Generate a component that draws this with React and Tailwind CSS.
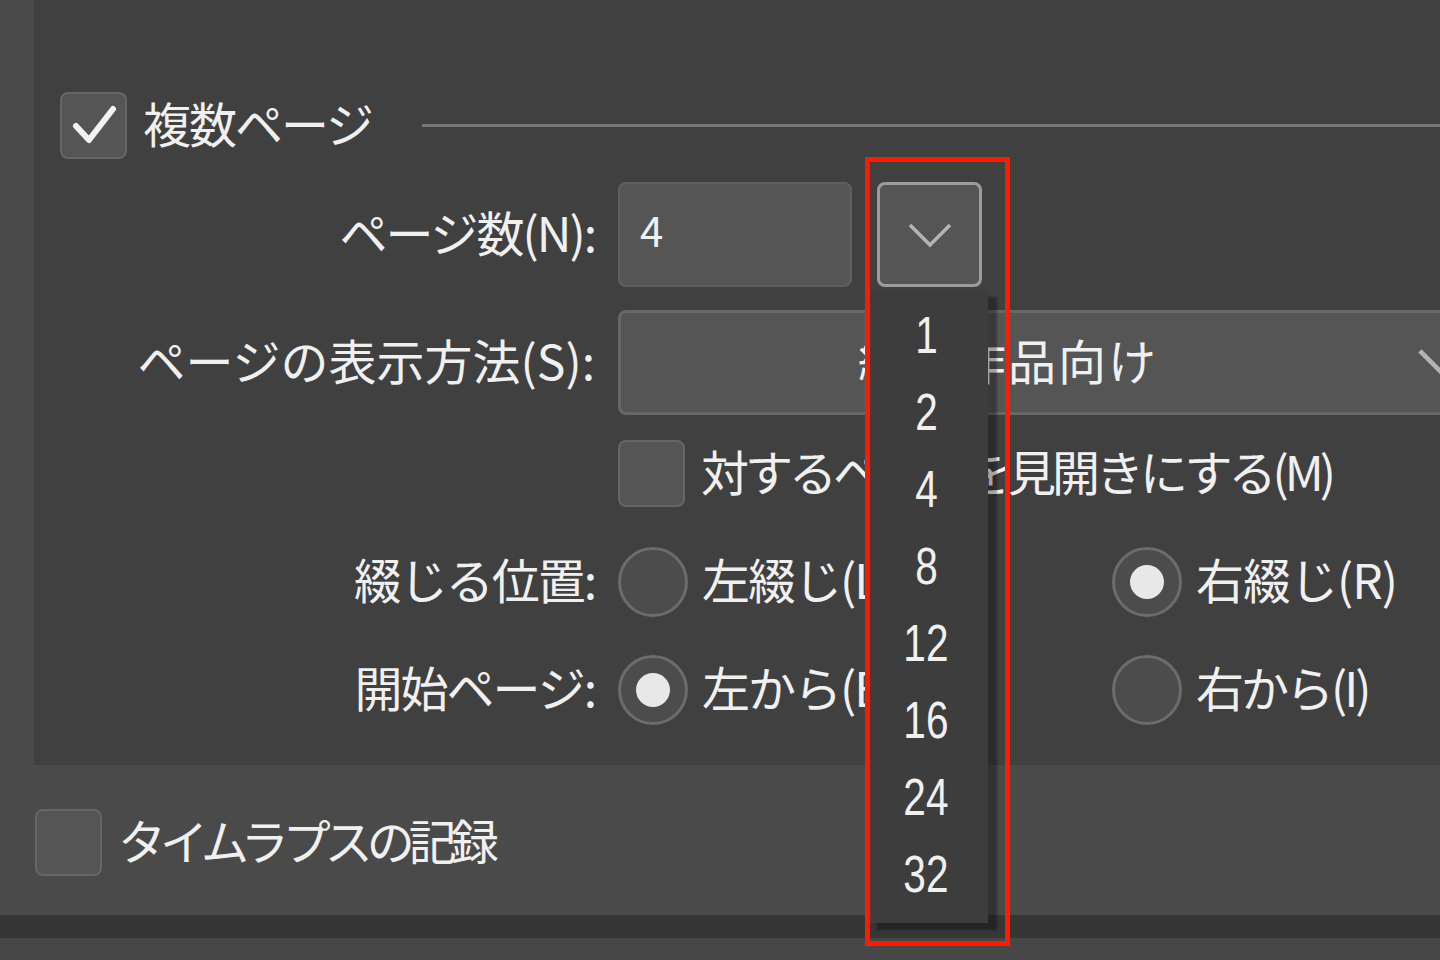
import React from "react";

const font = { fontFamily: '"Noto Sans CJK JP", "Noto Sans", sans-serif' };

function Check({ checked }) {
  return (
    <div className="w-[67px] h-[67px] shrink-0 rounded-[8px] bg-[#555555] border-2 border-[#666666] flex items-center justify-center">
      {checked && (
        <svg width="50" height="50" viewBox="0 0 50 50">
          <path d="M7 26 L20 40 L44 9" fill="none" stroke="#f2f2f2" strokeWidth="6" strokeLinecap="round" strokeLinejoin="round" />
        </svg>
      )}
    </div>
  );
}

function Radio({ checked }) {
  return (
    <div className="w-[70px] h-[70px] shrink-0 rounded-full bg-[#4c4c4c] border-[3px] border-[#6c6c6c] flex items-center justify-center">
      {checked && <div className="w-[34px] h-[34px] rounded-full bg-[#e8e8e8]" />}
    </div>
  );
}

function Chevron({ w = 46, h = 26 }) {
  return (
    <svg width={w} height={h} viewBox="0 0 46 26">
      <path d="M3 3 L23 23 L43 3" fill="none" stroke="#b4b4b4" strokeWidth="3.5" />
    </svg>
  );
}

function Row({ label, children, className = "", track = "tracking-[-2px]" }) {
  return (
    <div className={"flex items-center " + className}>
      <div className={"w-[584px] shrink-0 pr-[23px] pb-[8px] text-right whitespace-nowrap " + track}>{label}</div>
      <div className="flex items-center flex-1 min-w-0">{children}</div>
    </div>
  );
}

export default function App() {
  const counts = ["1", "2", "4", "8", "12", "16", "24", "32"];

  return (
    <div style={font} className="relative w-[1440px] h-[960px] overflow-hidden bg-[#4a4a4a] text-[#f0f0f0] text-[48px] leading-none">
      {/* group panel */}
      <div className="ml-[34px] h-[765px] bg-[#404040] pt-[92px] overflow-hidden">
        <div className="flex items-center h-[66px] pl-[26px]">
          <Check checked />
          <span className="ml-[16px] pb-[6px] tracking-[-2px] whitespace-nowrap">複数ページ</span>
          <div className="ml-[50px] flex-1 h-[3px] bg-[#767676]" />
        </div>

        <Row label="ページ数(N):" className="mt-[24px] h-[105px]">
          <div className="w-[234px] h-[105px] shrink-0 rounded-[8px] bg-[#555555] border-2 border-[#5f5f5f] pl-[20px] pt-[24px] text-[42px]">4</div>
          <div className="ml-[25px] w-[105px] h-[105px] shrink-0 rounded-[8px] bg-[#555555] border-[3px] border-[#9c9c9c] flex items-center justify-center">
            <Chevron />
          </div>
        </Row>

        <Row label="ページの表示方法(S):" track="tracking-[0px]" className="mt-[23px] h-[105px]">
          <div className="w-[880px] h-[105px] shrink-0 rounded-[8px] bg-[#555555] border-[3px] border-[#676767] flex items-center pl-[237px]">
            <span className="pb-[8px] tracking-[2px] whitespace-nowrap">紙の作品向け</span>
            <div className="ml-[258px] mt-[2px] shrink-0">
              <Chevron w={60} h={34} />
            </div>
          </div>
        </Row>

        <Row label="" className="mt-[25px] h-[67px]">
          <Check />
          <span className="ml-[16px] pb-[8px] tracking-[-4px] whitespace-nowrap">対するページを見開きにする(M)</span>
        </Row>

        <Row label="綴じる位置:" className="mt-[40px] h-[70px]">
          <div className="w-[494px] shrink-0 flex items-center">
            <Radio />
            <span className="ml-[14px] pb-[8px] tracking-[-2px] whitespace-nowrap">左綴じ(L)</span>
          </div>
          <Radio checked />
          <span className="ml-[14px] pb-[8px] tracking-[-1px] whitespace-nowrap">右綴じ(R)</span>
        </Row>

        <Row label="開始ページ:" className="mt-[38px] h-[70px]">
          <div className="w-[494px] shrink-0 flex items-center">
            <Radio checked />
            <span className="ml-[14px] pb-[8px] tracking-[-2px] whitespace-nowrap">左から(B)</span>
          </div>
          <Radio />
          <span className="ml-[14px] pb-[8px] tracking-[-3px] whitespace-nowrap">右から(I)</span>
        </Row>
      </div>

      {/* time-lapse row */}
      <div className="h-[150px] flex items-start pl-[35px] pt-[44px]">
        <div className="flex items-center">
          <Check />
          <span className="ml-[16px] pb-[8px] tracking-[-6px] whitespace-nowrap">タイムラプスの記録</span>
        </div>
      </div>
      <div className="h-[23px] bg-[#363636]" />
      <div className="h-[22px] bg-[#474747]" />

      {/* open dropdown list */}
      <div className="absolute left-[868px] top-[290px] w-[120px] h-[633px] bg-[#3d3d3d] pt-[6px] shadow-[9px_7px_2px_rgba(0,0,0,0.32)]">
        {counts.map((c) => (
          <div key={c} className="h-[77px] flex items-center justify-center">
            <span style={{ fontFamily: '"Liberation Sans", sans-serif' }} className="inline-block text-[52px] scale-x-[0.78] -ml-[4px]">{c}</span>
          </div>
        ))}
      </div>

      {/* highlight frame */}
      <div className="absolute left-[865px] top-[157px] w-[145px] h-[789px] border-[5px] border-[#ff1a00]" />
    </div>
  );
}
